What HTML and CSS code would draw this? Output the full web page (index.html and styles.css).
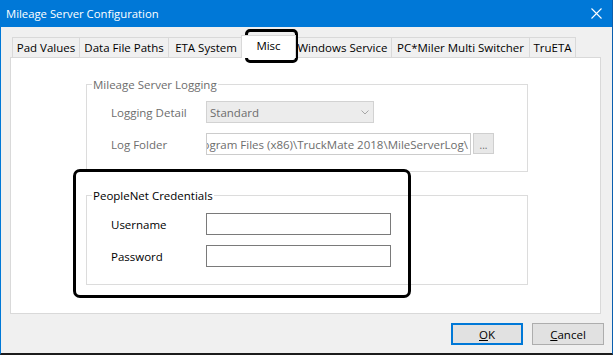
FILE: index.html
```html
<!DOCTYPE html>
<html>
<head>
<meta charset="utf-8">
<title>Mileage Server Configuration</title>
<link rel="stylesheet" href="styles.css">
</head>
<body>
<div class="window">
  <div class="titlebar">
    <span class="title">Mileage Server Configuration</span>
    <svg class="close" width="11" height="11" viewBox="0 0 11 11"><path d="M0.5 0.5 L10.5 10.5 M10.5 0.5 L0.5 10.5" stroke="#fff" stroke-width="1.1" fill="none"/></svg>
  </div>
  <div class="client">
    <div class="tabs">
      <div class="tab t-pad">Pad Values</div>
      <div class="tab t-data">Data File Paths</div>
      <div class="tab t-eta">ETA System</div>
      <div class="tab t-misc selected">Misc</div>
      <div class="tab t-win">Windows Service</div>
      <div class="tab t-pcm">PC*Miler Multi Switcher</div>
      <div class="tab t-tru">TruETA</div>
    </div>
    <div class="panel">
      <fieldset class="group logging disabled">
        <legend>Mileage Server Logging</legend>
        <div class="rows">
          <div class="row">
            <span class="label">Logging Detail</span>
            <div class="combo"><span>Standard</span><svg class="chev" width="8" height="5" viewBox="0 0 8 5"><path d="M0.5 0.5 L4 4 L7.5 0.5" stroke="#a6a6a6" stroke-width="1" fill="none"/></svg></div>
          </div>
          <div class="row">
            <span class="label">Log Folder</span>
            <div class="textbox path"><span>C:\Program Files (x86)\TruckMate 2018\MileServerLog\</span></div>
            <div class="browse">...</div>
          </div>
        </div>
      </fieldset>
      <fieldset class="group creds">
        <legend>PeopleNet Credentials</legend>
        <div class="rows">
          <div class="row">
            <span class="label">Username</span>
            <div class="input"></div>
          </div>
          <div class="row">
            <span class="label">Password</span>
            <div class="input"></div>
          </div>
        </div>
      </fieldset>
    </div>
    <div class="buttons">
      <div class="btn default"><u>O</u>K</div>
      <div class="btn"><u>C</u>ancel</div>
    </div>
  </div>
  <div class="mark mark-tab"></div>
  <div class="mark mark-cred"></div>
</div>
</body>
</html>
```
FILE: styles.css
```css
html, body {
  margin: 0;
  padding: 0;
}
body {
  font-family: "Open Sans", "Noto Sans", sans-serif;
  font-size: 11.5px;
  color: #000;
  background: #fff;
}
.window {
  position: relative;
  box-sizing: border-box;
  width: 613px;
  height: 355px;
  background: #f0f0f0;
  border-left: 1px solid #0078d7;
  border-right: 1px solid #0a5fae;
  border-bottom: 2px solid #1c1c1c;
  overflow: hidden;
}
.titlebar {
  height: 27px;
  background: #0078d7;
  color: #fff;
  display: flex;
  align-items: center;
  justify-content: space-between;
  padding-left: 5px;
  font-size: 11.3px;
}
.close {
  margin-right: 10px;
}
.client {
  padding: 8px 11px 0 9px;
}
.tabs {
  display: flex;
  align-items: flex-end;
  height: 22px;
  padding-left: 2px;
}
.tab {
  box-sizing: border-box;
  height: 20px;
  border: 1px solid #d9d9d9;
  border-bottom: none;
  margin-left: -1px;
  display: flex;
  align-items: center;
  justify-content: center;
  background: #f0f0f0;
  white-space: nowrap;
}
.tab:first-child {
  margin-left: 0;
}
.t-pad { width: 68px; }
.t-data { width: 90px; }
.t-eta { width: 76px; }
.t-win { width: 99px; }
.t-pcm { width: 139px; }
.t-tru { width: 47px; }
.tab.selected {
  width: 55px;
  height: 23px;
  margin: 0 -2px -1px -3px;
  padding-bottom: 3px;
  background: #fff;
  position: relative;
  z-index: 1;
}
.panel {
  box-sizing: border-box;
  height: 257px;
  background: #fff;
  border: 1px solid #d9d9d9;
  padding: 18px 0 0 75px;
}
.group {
  box-sizing: border-box;
  width: 442px;
  min-width: 0;
  margin: 0;
  padding: 0;
  border: 1px solid #dcdcdc;
}
.group legend {
  margin-left: 5px;
  padding: 0 1px;
  height: 17px;
  line-height: 17px;
}
.rows {
  display: flex;
  flex-direction: column;
  gap: 10px;
  padding: 8px 0 16px 24px;
}
.creds {
  margin-top: 15px;
}
.creds .rows {
  padding: 9px 0 17px 24px;
}
.row {
  display: flex;
  align-items: center;
  height: 22px;
}
.label {
  width: 95px;
  flex: none;
}
.disabled,
.disabled legend {
  color: #6d6d6d;
}
.combo {
  box-sizing: border-box;
  width: 168px;
  height: 22px;
  background: #ececec;
  border: 1px solid #d2d2d2;
  display: flex;
  align-items: center;
  justify-content: space-between;
  padding: 0 4px 0 3px;
}
.textbox {
  box-sizing: border-box;
  width: 265px;
  height: 22px;
  border: 1px solid #cccccc;
  background: #fff;
  display: flex;
  align-items: center;
  justify-content: flex-end;
  overflow: hidden;
  white-space: nowrap;
  padding-right: 2px;
  flex: none;
}
.browse {
  box-sizing: border-box;
  width: 21px;
  height: 21px;
  margin-left: 2px;
  align-self: flex-start;
  border: 1px solid #cfcfcf;
  background: #e8e8e8;
  display: flex;
  align-items: center;
  justify-content: center;
  font-size: 10px;
  line-height: 1;
  padding-top: 2px;
}
.input {
  box-sizing: border-box;
  width: 185px;
  height: 22px;
  border: 1px solid #7a7a7a;
  background: #fff;
}
.buttons {
  display: flex;
  justify-content: flex-end;
  gap: 9px;
  margin: 9px -3px 0 0;
}
.btn {
  box-sizing: border-box;
  width: 72px;
  height: 22px;
  background: #e1e1e1;
  border: 1px solid #adadad;
  display: flex;
  align-items: center;
  justify-content: center;
}
.btn.default {
  border: 2px solid #0078d7;
}
.mark {
  position: absolute;
  box-sizing: border-box;
  border: 3px solid #000;
}
.mark-tab {
  left: 244px;
  top: 29px;
  width: 53px;
  height: 34px;
  border-radius: 5px;
}
.mark-cred {
  left: 72px;
  top: 169px;
  width: 338px;
  height: 129px;
  border-radius: 7px;
}
```
